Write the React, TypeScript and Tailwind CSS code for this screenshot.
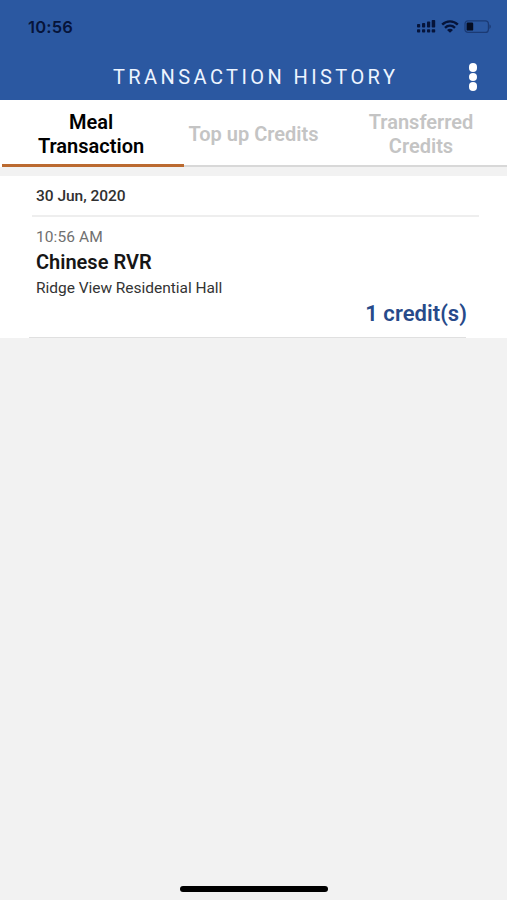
import React from 'react';

interface Transaction {
  id: string;
  time: string;
  title: string;
  location: string;
  credits: number;
}

const transactions: Transaction[] = [
  {
    id: '1',
    time: '10:56 AM',
    title: 'Chinese RVR',
    location: 'Ridge View Residential Hall',
    credits: 1,
  },
];

const SignalIcon = () => (
  <svg width="20" height="16" viewBox="0 0 20 16" fill="#06143a">
    <rect x="1" y="6" width="3.2" height="3.6" rx="0.8" />
    <rect x="6" y="5" width="3.2" height="4.6" rx="0.8" />
    <rect x="11" y="3.5" width="3.2" height="6.1" rx="0.8" />
    <rect x="15.7" y="2" width="3.5" height="7.6" rx="0.8" />
    <rect x="1" y="11.2" width="3.2" height="3.4" rx="0.8" />
    <rect x="6" y="11.2" width="3.2" height="3.4" rx="0.8" />
    <rect x="11" y="11.2" width="3.2" height="3.4" rx="0.8" />
    <rect x="15.7" y="11.2" width="3.5" height="3.4" rx="0.8" />
  </svg>
);

const WifiIcon = () => (
  <svg width="18" height="16" viewBox="0 0 18 16" fill="none" stroke="#06143a" strokeWidth="2.4">
    <path d="M1.2 6.6C5.5 2.3 12.5 2.3 16.8 6.6" />
    <path d="M4 9.9C6.9 7.1 11.1 7.1 14 9.9" />
    <path d="M6 12C7.8 10.3 10.2 10.3 12 12L9 14.8Z" fill="#06143a" stroke="none" />
  </svg>
);

const BatteryIcon = () => (
  <svg width="28" height="16" viewBox="0 0 28 16" fill="none">
    <rect x="1" y="2.8" width="23.4" height="11.6" rx="3" stroke="#1b3a74" strokeWidth="1.2" />
    <rect x="2.6" y="4.6" width="6.6" height="8" rx="1.2" fill="#050d22" />
    <path d="M25.4 6.3C27.4 7.2 27.4 10 25.4 10.9Z" fill="#1b3a74" />
  </svg>
);

const Header = () => (
  <header className="h-[100px] bg-[#2b58a1]">
    <div className="flex h-[54px] items-center justify-between pl-7 pr-[15px]">
      <span className="font-['Inter',sans-serif] text-[16.5px] font-semibold tracking-[0.2px] text-[#06143a]">
        10:56
      </span>
      <div className="flex items-center gap-[5px] pb-[3px]">
        <SignalIcon />
        <WifiIcon />
        <BatteryIcon />
      </div>
    </div>
    <div className="flex h-[46px] items-center pl-[113px] pr-[30px]">
      <h1 className="flex-1 whitespace-nowrap text-[20px] tracking-[3.42px] text-[#edf4ff]">
        TRANSACTION HISTORY
      </h1>
      <div className="flex flex-col gap-[1px]">
        <span className="size-[8.4px] rounded-full bg-white" />
        <span className="size-[8.4px] rounded-full bg-white" />
        <span className="size-[8.4px] rounded-full bg-white" />
      </div>
    </div>
  </header>
);

const Tabs = () => (
  <nav className="flex h-[67px] bg-white pl-[2px] text-center text-[20px] font-semibold leading-[23.5px] text-[#c4c4c4]">
    <div className="flex w-[182px] items-center justify-center border-b-3 border-[#bb6a30] pr-1 pt-[5px] text-black">
      <span>
        Meal
        <br />
        Transaction
      </span>
    </div>
    <div className="flex w-[139px] items-center justify-center whitespace-nowrap border-b-2 border-[#d8d8d8] pt-[4px]">
      Top up Credits
    </div>
    <div className="flex flex-1 items-center justify-center border-b-2 border-[#d8d8d8] pl-3 pt-[4px]">
      <span>
        Transferred
        <br />
        Credits
      </span>
    </div>
  </nav>
);

const TransactionItem: React.FC<{ transaction: Transaction }> = ({ transaction }) => (
  <div className="flex h-[120px] flex-col pl-9 pr-10 pt-[10px]">
    <span className="text-[15.5px] leading-[20px] tracking-[0.1px] text-[#707070]">{transaction.time}</span>
    <span className="mt-[3px] text-[20px] font-semibold leading-[24px] text-[#161616]">{transaction.title}</span>
    <span className="mt-[4px] text-[15.5px] leading-[20px] tracking-[-0.03px] text-[#333333]">{transaction.location}</span>
    <span className="self-end text-[22px] font-semibold leading-[32px] tracking-[0.05px] text-[#274a8a]">
      {transaction.credits} credit(s)
    </span>
  </div>
);

export default function App() {
  return (
    <div className="flex h-[900px] w-[507px] flex-col overflow-hidden bg-[#f2f2f2] font-['Roboto',sans-serif]">
      <Header />
      <Tabs />
      <main className="mt-[9px] bg-white">
        <div className="ml-8 mr-7 flex h-[41px] items-center border-b-2 border-[#eeeeee] pl-1 pt-[3px] text-[15.5px] font-medium tracking-[-0.03px] text-[#303030]">
          30 Jun, 2020
        </div>
        {transactions.map(transaction => (
          <TransactionItem key={transaction.id} transaction={transaction} />
        ))}
        <div className="ml-[29px] mr-[41px] h-px bg-[#e0e0e0]" />
      </main>
      <div className="mx-auto mb-2 mt-auto h-[6px] w-[148px] rounded-full bg-black" />
    </div>
  );
}
